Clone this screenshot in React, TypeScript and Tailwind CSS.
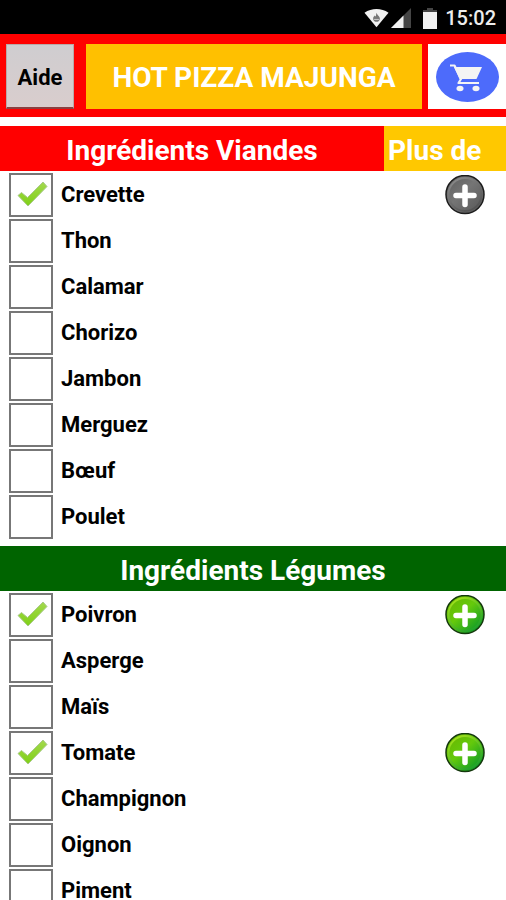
import React, { useState } from "react";

type Ingredient = {
  nom: string;
  checked?: boolean;
  plus?: "gray" | "green";
};

const viandes: Ingredient[] = [
  { nom: "Crevette", checked: true, plus: "gray" },
  { nom: "Thon" },
  { nom: "Calamar" },
  { nom: "Chorizo" },
  { nom: "Jambon" },
  { nom: "Merguez" },
  { nom: "Bœuf" },
  { nom: "Poulet" },
];

const legumes: Ingredient[] = [
  { nom: "Poivron", checked: true, plus: "green" },
  { nom: "Asperge" },
  { nom: "Maïs" },
  { nom: "Tomate", checked: true, plus: "green" },
  { nom: "Champignon" },
  { nom: "Oignon" },
  { nom: "Piment" },
];

function StatusBar() {
  return (
    <div className="flex h-[34px] items-center justify-end bg-black pt-0.5 pr-2.5 text-white">
      <svg width="25" height="20" viewBox="0 0 26 20" aria-hidden="true">
        <path d="M0.5 4.5C8 -0.5 18 -0.5 25.5 4.5L13 19.5Z" fill="#f1f1f1" />
        <path d="M13 4.5C13.5 7 16.5 8 16.5 10.5C16.5 13 15 14 13 14S9.5 13 9.5 10.5C9.5 9 10.5 8.5 11 7.5L12 8.5C12.8 7.5 12.5 6 13 4.5Z" fill="#777" />
        <path d="M10.5 11.5h5" stroke="#ccc" strokeWidth="1" />
      </svg>
      <svg className="ml-0.5" width="20" height="20" viewBox="0 0 20 20" aria-hidden="true">
        <path d="M20 0V20H0Z" fill="#454545" />
        <path d="M12.5 7.5V20H0Z" fill="#f1f1f1" />
      </svg>
      <svg className="ml-3" width="14" height="21" viewBox="0 0 14 21" aria-hidden="true">
        <path d="M4 0h6v2h4v3H0V2h4Z" fill="#454545" />
        <path d="M0 4h14v17H0Z" fill="#f1f1f1" />
      </svg>
      <span className="ml-2 text-[20px] leading-6 font-medium text-[#ececec]">15:02</span>
    </div>
  );
}

function CartIcon() {
  return (
    <svg className="h-[50px] w-[63px]" viewBox="0 0 63 50" aria-hidden="true">
      <ellipse cx="31.5" cy="25" rx="31.5" ry="25" fill="#4d6bfb" />
      <path d="M18 15H46L40.5 27H23.5Z" fill="#f4f4f4" />
      <path
        d="M14 13.5H18.5L25 27L22.5 31H43"
        fill="none"
        stroke="#f4f4f4"
        strokeWidth="2.2"
        strokeLinejoin="round"
      />
      <ellipse cx="24" cy="36.5" rx="3.5" ry="2.8" fill="#f4f4f4" />
      <ellipse cx="40" cy="36.5" rx="3.5" ry="2.8" fill="#f4f4f4" />
    </svg>
  );
}

function PlusIcon({ color }: { color: "gray" | "green" }) {
  const green = color === "green";
  return (
    <svg width="40" height="40" viewBox="0 0 40 40" aria-hidden="true">
      <defs>
        <linearGradient id={"plus-" + color} x1="0.1" y1="0.1" x2="0.85" y2="0.9">
          <stop offset="0" stopColor={green ? "#68b800" : "#626262"} />
          <stop offset="0.45" stopColor={green ? "#65c90c" : "#757575"} />
          <stop offset="1" stopColor={green ? "#0b9a28" : "#5c5c5c"} />
        </linearGradient>
        <linearGradient id={"shine-" + color} x1="0.2" y1="0" x2="0.8" y2="1">
          <stop offset="0" stopColor={green ? "#a5e21c" : "#8a8a8a"} />
          <stop offset="1" stopColor={green ? "#1b9d2d" : "#505050"} />
        </linearGradient>
      </defs>
      <circle cx="20" cy="19.5" r="19" fill={"url(#plus-" + color + ")"} stroke={green ? "#14380c" : "#1c1c1c"} strokeWidth="1.5" />
      <circle cx="20" cy="19.5" r="16.5" fill="none" stroke={"url(#shine-" + color + ")"} strokeWidth="2" />
      <path d="M20 12V29.5M11 20.5H29" stroke="#fff" strokeWidth="5.5" strokeLinecap="round" />
    </svg>
  );
}

function CheckIcon() {
  return (
    <svg
      className="pointer-events-none absolute inset-0 hidden h-full w-full peer-checked:block"
      viewBox="0 0 44 44"
      aria-hidden="true"
    >
      <defs>
        <linearGradient id="check" x1="0" y1="0" x2="0" y2="1">
          <stop offset="0" stopColor="#a3d94e" />
          <stop offset="1" stopColor="#7fd016" />
        </linearGradient>
      </defs>
      <path
        d="M9 22.5L12.5 19.5L18.5 24.5L34 9L38 13.5L19 33Z"
        fill="url(#check)"
        stroke="#a9c98a"
        strokeWidth="1"
        strokeLinejoin="round"
      />
    </svg>
  );
}

function IngredientList({ items }: { items: Ingredient[] }) {
  const [list, setList] = useState(items);

  const toggle = (nom: string) => {
    setList(list.map((i) => (i.nom === nom ? { ...i, checked: !i.checked } : i)));
  };

  return (
    <ul className="pt-px">
      {list.map((item) => (
        <li key={item.nom} className="flex h-[46px] items-center justify-between pr-[21px] pl-[9px]">
          <label className="flex items-center gap-2 text-[22px] leading-6 font-bold text-black">
            <span className="relative h-11 w-11">
              <input
                type="checkbox"
                checked={!!item.checked}
                onChange={() => toggle(item.nom)}
                className="peer block h-11 w-11 appearance-none border-2 border-[#777] bg-white"
              />
              <CheckIcon />
            </span>
            {item.nom}
          </label>
          {item.plus && (
            <button type="button" aria-label={"Plus de " + item.nom} className="rounded-full">
              <PlusIcon color={item.plus} />
            </button>
          )}
        </li>
      ))}
    </ul>
  );
}

export default function App() {
  return (
    <div className="min-h-screen bg-white font-['Roboto',sans-serif]">
      <StatusBar />

      {/* Barre du haut */}
      <header className="flex h-[83px] items-start bg-[#ff0000] pt-2.5 pl-1.5">
        <button
          type="button"
          className="h-[65px] w-[68px] border border-b-2 border-[#b9a9a9] border-b-[#8b4040] bg-linear-to-b from-[#cfcdd0] to-[#d9cdcd] pt-1 text-[22px] leading-7 font-bold text-black"
        >
          Aide
        </button>
        <h1 className="ml-3 flex h-[65px] flex-1 items-center justify-center bg-[#ffc000] pt-0.5 text-[28px] leading-8 font-bold text-white">
          HOT PIZZA MAJUNGA
        </h1>
        <button type="button" aria-label="Panier" className="ml-1.5 flex h-[65px] w-[78px] items-center justify-center bg-white">
          <CartIcon />
        </button>
      </header>

      <main className="pt-[9px]">
        <section>
          <div className="flex h-[45px] text-[28px] leading-[43px] font-bold text-white">
            <h2 className="flex-1 bg-[#ff0000] pt-[3px] text-center">Ingrédients Viandes</h2>
            <span className="w-[122px] bg-[#ffc800] pt-[3px] pl-1">Plus de</span>
          </div>
          <IngredientList items={viandes} />
        </section>

        <section className="pt-1.5">
          <h2 className="h-[45px] bg-[#006400] pt-[3px] text-center text-[28px] leading-[43px] font-bold text-white">
            Ingrédients Légumes
          </h2>
          <IngredientList items={legumes} />
        </section>
      </main>
    </div>
  );
}
